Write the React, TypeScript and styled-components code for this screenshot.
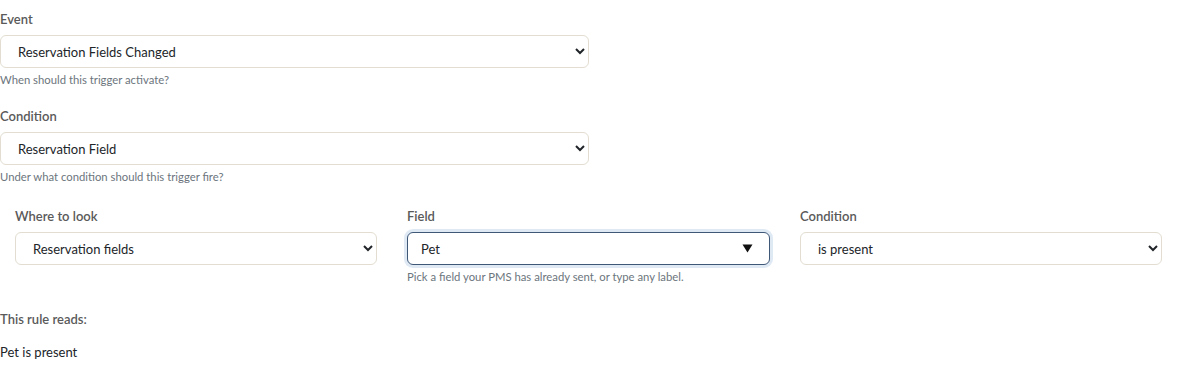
import styled, { createGlobalStyle } from 'styled-components'

const GlobalStyle = createGlobalStyle`
  html, body {
    margin: 0;
    padding: 0;
    background: #ffffff;
  }
  body {
    font-family: 'Lato', 'Noto Sans', sans-serif;
    color: #212529;
  }
`

const Page = styled.div`
  width: 1177px;
  padding-top: 11px;
`

const Group = styled.div`
  width: 589px;
  margin-bottom: 22px;
`

const Label = styled.div`
  color: #5a5a5a;
  font-size: 13px;
  font-weight: 600;
  line-height: 16px;
  margin-bottom: 8px;
`

const Select = styled.select`
  display: block;
  width: 100%;
  height: 33px;
  padding: 0 10px 0 13px;
  border: 1px solid #e2ddd0;
  border-radius: 6px;
  background: #ffffff;
  color: #212529;
  font-family: inherit;
  font-size: 13px;
  outline: none;
`

const Help = styled.div`
  margin-top: 5px;
  color: #6c757d;
  font-size: 11.3px;
  line-height: 13px;
`

const Row = styled.div`
  display: grid;
  grid-template-columns: 362px 363px 362px;
  gap: 30px;
  padding: 0 15px;
  margin-top: 25px;
`

const Col = styled.div`
  display: flex;
  flex-direction: column;
`

const ComboBox = styled.div`
  display: flex;
  align-items: center;
  height: 33px;
  box-sizing: border-box;
  border: 1px solid #3f5878;
  border-radius: 6px;
  box-shadow: 0 0 0 3px rgba(140, 175, 215, 0.28);
  background: #ffffff;
  padding: 0 16px 0 13px;
`

const ComboInput = styled.input`
  flex: 1;
  min-width: 0;
  border: none;
  outline: none;
  padding: 0;
  background: transparent;
  color: #212529;
  font-family: inherit;
  font-size: 13px;
`

const Summary = styled.div`
  margin-top: 28px;
`

const SummaryTitle = styled(Label)`
  margin-bottom: 17px;
`

const SummaryText = styled.div`
  font-size: 13px;
  line-height: 16px;
  color: #212529;
`

export default function App() {
  return (
    <>
      <GlobalStyle />
      <Page>
        <Group>
          <Label>Event</Label>
          <Select defaultValue="fields">
            <option value="fields">Reservation Fields Changed</option>
            <option value="created">Reservation Created</option>
          </Select>
          <Help>When should this trigger activate?</Help>
        </Group>

        <Group>
          <Label>Condition</Label>
          <Select defaultValue="field">
            <option value="field">Reservation Field</option>
            <option value="always">Always</option>
          </Select>
          <Help>Under what condition should this trigger fire?</Help>
        </Group>

        <Row>
          <Col>
            <Label>Where to look</Label>
            <Select defaultValue="res">
              <option value="res">Reservation fields</option>
            </Select>
          </Col>
          <Col>
            <Label>Field</Label>
            <ComboBox>
              <ComboInput defaultValue="Pet" />
              <svg width="11" height="9" viewBox="0 0 11 9">
                <path d="M0.5 0.5 H10.5 L5.5 8.5 Z" fill="#111" />
              </svg>
            </ComboBox>
            <Help>Pick a field your PMS has already sent, or type any label.</Help>
          </Col>
          <Col>
            <Label>Condition</Label>
            <Select defaultValue="present">
              <option value="present">is present</option>
              <option value="absent">is absent</option>
            </Select>
          </Col>
        </Row>

        <Summary>
          <SummaryTitle>This rule reads:</SummaryTitle>
          <SummaryText>Pet is present</SummaryText>
        </Summary>
      </Page>
    </>
  )
}
